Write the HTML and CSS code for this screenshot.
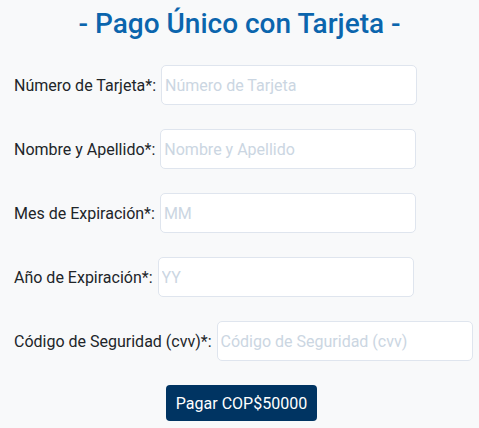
FILE: index.html
```html
<!DOCTYPE html>
<html lang="es">
<head>
<meta charset="utf-8">
<title>Pago Único con Tarjeta</title>
<link rel="stylesheet" href="styles.css">
</head>
<body>
<h2 class="title">- Pago Único con Tarjeta -</h2>
<form class="pay">
  <div class="row">
    <label class="label" for="num">Número de Tarjeta*:</label>
    <input class="field" id="num" type="text" placeholder="Número de Tarjeta">
  </div>
  <div class="row">
    <label class="label" for="name">Nombre y Apellido*:</label>
    <input class="field" id="name" type="text" placeholder="Nombre y Apellido">
  </div>
  <div class="row">
    <label class="label" for="mm">Mes de Expiración*:</label>
    <input class="field" id="mm" type="text" placeholder="MM">
  </div>
  <div class="row">
    <label class="label" for="yy">Año de Expiración*:</label>
    <input class="field" id="yy" type="text" placeholder="YY">
  </div>
  <div class="row">
    <label class="label" for="cvv">Código de Seguridad (cvv)*:</label>
    <input class="field" id="cvv" type="text" placeholder="Código de Seguridad (cvv)">
  </div>
  <div class="actions">
    <button class="pay-btn" type="button">Pagar COP$50000</button>
  </div>
</form>
</body>
</html>
```

FILE: styles.css
```css
html, body {
  margin: 0;
  background: #f8f9fa;
}
body {
  font-family: Roboto, "Noto Sans", sans-serif;
  color: #212529;
}
.title {
  margin: 0;
  padding-top: 6px;
  text-align: center;
  font-size: 28px;
  font-weight: 500;
  color: #0b65ad;
  line-height: 35px;
}
.pay {
  padding: 0 14px;
}
.row {
  display: flex;
  align-items: center;
  gap: 5px;
  margin-top: 24px;
}
.label {
  font-size: 16px;
  white-space: nowrap;
  flex-shrink: 0;
}
.field {
  box-sizing: border-box;
  width: 256px;
  height: 40px;
  flex-shrink: 0;
  border: 1px solid #dfe5ee;
  border-radius: 5px;
  background: #fff;
  padding: 0 3px;
  font-family: inherit;
  font-size: 16px;
  color: #212529;
}
.field::placeholder {
  color: #cbd6e2;
}
.actions {
  display: flex;
  justify-content: center;
  padding-left: 4px;
  margin-top: 24px;
}
.pay-btn {
  width: 151px;
  height: 36px;
  border: none;
  border-radius: 4px;
  background: #003462;
  color: #fff;
  font-family: inherit;
  font-size: 16px;
}
```
